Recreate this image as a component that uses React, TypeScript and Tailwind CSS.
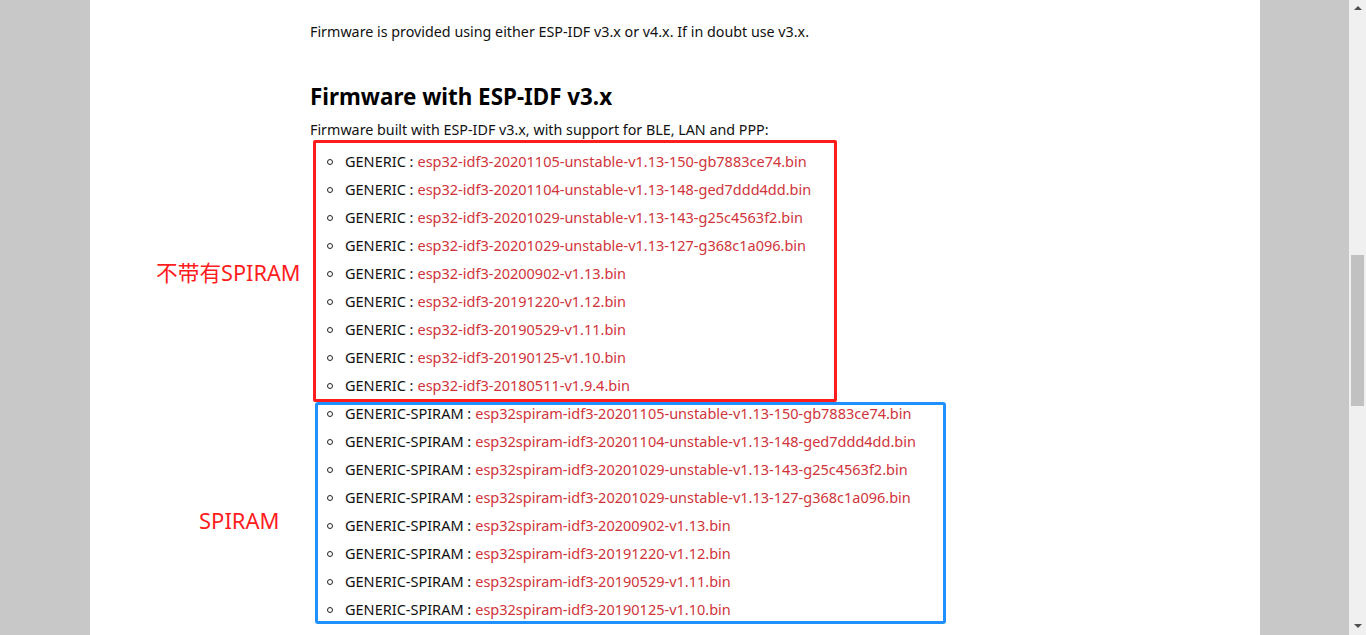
import React from "react";

const red = [
  "esp32-idf3-20201105-unstable-v1.13-150-gb7883ce74.bin",
  "esp32-idf3-20201104-unstable-v1.13-148-ged7ddd4dd.bin",
  "esp32-idf3-20201029-unstable-v1.13-143-g25c4563f2.bin",
  "esp32-idf3-20201029-unstable-v1.13-127-g368c1a096.bin",
  "esp32-idf3-20200902-v1.13.bin",
  "esp32-idf3-20191220-v1.12.bin",
  "esp32-idf3-20190529-v1.11.bin",
  "esp32-idf3-20190125-v1.10.bin",
  "esp32-idf3-20180511-v1.9.4.bin",
];
const blue = [
  "esp32spiram-idf3-20201105-unstable-v1.13-150-gb7883ce74.bin",
  "esp32spiram-idf3-20201104-unstable-v1.13-148-ged7ddd4dd.bin",
  "esp32spiram-idf3-20201029-unstable-v1.13-143-g25c4563f2.bin",
  "esp32spiram-idf3-20201029-unstable-v1.13-127-g368c1a096.bin",
  "esp32spiram-idf3-20200902-v1.13.bin",
  "esp32spiram-idf3-20191220-v1.12.bin",
  "esp32spiram-idf3-20190529-v1.11.bin",
  "esp32spiram-idf3-20190125-v1.10.bin",
];

function Item({ label, file }: { label: string; file: string }) {
  return (
    <li className="flex items-center h-[28px] text-[14.5px]">
      <span className="w-[6px] h-[6px] rounded-full border border-[#222] ml-[17px] mr-[12px]" />
      <span className="text-[#111]">{label} : </span>
      <a className="text-[#d0343a] ml-[4px]">{file}</a>
    </li>
  );
}

export default function App() {
  return (
    <div
      className="flex h-[635px] w-[1366px] overflow-hidden bg-[#c8c8c8]"
      style={{ fontFamily: '"Noto Sans", "Noto Sans CJK SC", sans-serif' }}
    >
      <div className="w-[90px] shrink-0" />
      <div className="relative w-[1170px] shrink-0 bg-white pl-[220px] pt-[18px] text-[14.3px] text-[#111]">
        <p className="leading-[28px]">
          Firmware is provided using either ESP-IDF v3.x or v4.x. If in doubt use v3.x.
        </p>
        <h2 className="mt-[35px] text-[22.4px] font-bold leading-[32px] text-black">
          Firmware with ESP-IDF v3.x
        </h2>
        <p className="mt-[3px] leading-[28px]">
          Firmware built with ESP-IDF v3.x, with support for BLE, LAN and PPP:
        </p>
        <ul className="mt-[4px]">
          {red.map((f) => (
            <Item key={f} label="GENERIC" file={f} />
          ))}
          {blue.map((f) => (
            <Item key={f} label="GENERIC-SPIRAM" file={f} />
          ))}
        </ul>

        <div className="absolute left-[223px] top-[140px] w-[524px] h-[262px] border-[3px] border-[#ff1c1c] rounded-[2px] pointer-events-none" />
        <div className="absolute left-[225px] top-[402px] w-[631px] h-[222px] border-[3px] border-[#1e90ff] rounded-[3px] pointer-events-none" />

        <div className="absolute left-[66px] top-[258px] text-[21.7px] leading-[30px] text-[#ff1c1c]">
          不带有SPIRAM
        </div>
        <div className="absolute left-[109px] top-[505px] text-[22px] leading-[30px] text-[#ff1c1c]">
          SPIRAM
        </div>
      </div>
      <div className="w-[89px] shrink-0" />
      <div className="relative w-[17px] shrink-0 bg-[#f0f0f0] flex flex-col items-center">
        <div className="mt-[6px] w-0 h-0 border-l-[4px] border-r-[4px] border-b-[4px] border-l-transparent border-r-transparent border-b-[#505050]" />
        <div className="mt-[245px] w-[13px] h-[151px] bg-[#c1c1c1]" />
        <div className="mt-auto mb-[7px] w-0 h-0 border-l-[4px] border-r-[4px] border-t-[4px] border-l-transparent border-r-transparent border-t-[#505050]" />
      </div>
    </div>
  );
}
